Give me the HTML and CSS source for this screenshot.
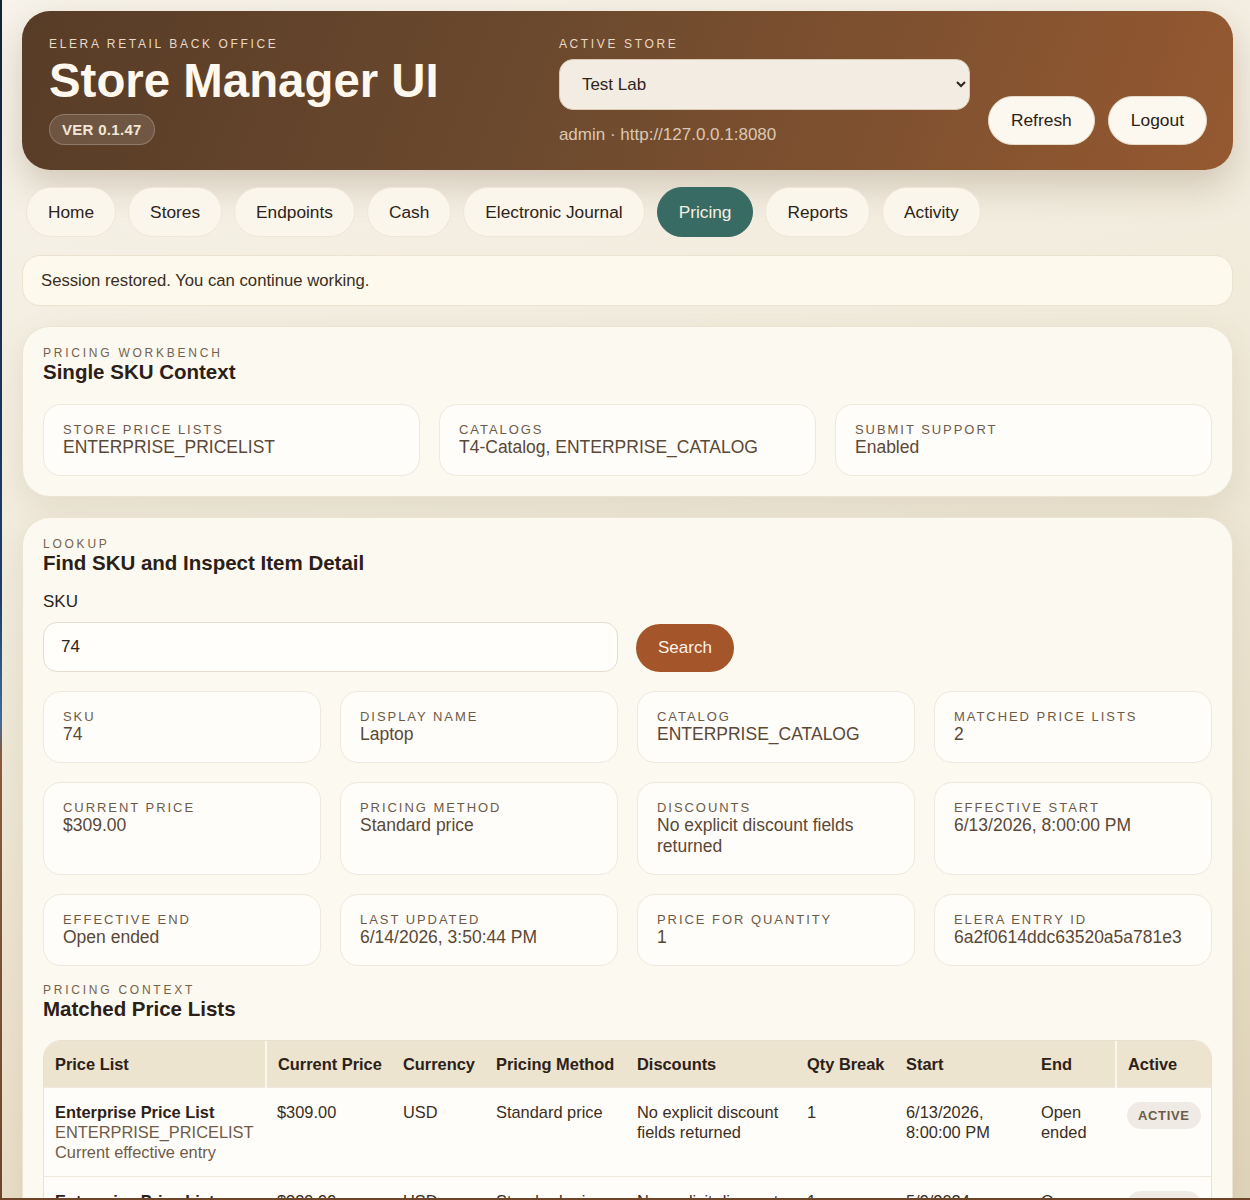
FILE: index.html
```html
<!DOCTYPE html>
<html lang="en">
<head>
  <meta charset="UTF-8">
  <title>Store Manager UI</title>
  <link rel="stylesheet" href="styles.css">
</head>
<body>
  <div class="app">
    <header class="topbar">
      <div class="brand">
        <div class="eyebrow light">Elera Retail Back Office</div>
        <h1>Store Manager UI</h1>
        <span class="version">VER 0.1.47</span>
      </div>

      <div class="store">
        <label class="eyebrow light" for="store">Active Store</label>
        <select id="store">
          <option>Test Lab</option>
        </select>
        <div class="session">admin · http://127.0.0.1:8080</div>
      </div>

      <div class="actions">
        <button class="pill-btn">Refresh</button>
        <button class="pill-btn">Logout</button>
      </div>
    </header>

    <nav class="tabs">
      <button class="tab">Home</button>
      <button class="tab">Stores</button>
      <button class="tab">Endpoints</button>
      <button class="tab">Cash</button>
      <button class="tab">Electronic Journal</button>
      <button class="tab active">Pricing</button>
      <button class="tab">Reports</button>
      <button class="tab">Activity</button>
    </nav>

    <div class="notice">Session restored. You can continue working.</div>

    <section class="panel">
      <div class="eyebrow">Pricing Workbench</div>
      <h2>Single SKU Context</h2>

      <div class="stats three">
        <div class="stat">
          <div class="stat-label">Store Price Lists</div>
          <div class="stat-value">ENTERPRISE_PRICELIST</div>
        </div>
        <div class="stat">
          <div class="stat-label">Catalogs</div>
          <div class="stat-value">T4-Catalog, ENTERPRISE_CATALOG</div>
        </div>
        <div class="stat">
          <div class="stat-label">Submit Support</div>
          <div class="stat-value">Enabled</div>
        </div>
      </div>
    </section>

    <section class="panel">
      <div class="eyebrow">Lookup</div>
      <h2>Find SKU and Inspect Item Detail</h2>

      <form class="lookup" id="lookupForm">
        <label class="field">
          <span>SKU</span>
          <input type="text" value="74">
        </label>
        <button type="submit" class="search-btn">Search</button>
      </form>

      <div class="stats four">
        <div class="stat">
          <div class="stat-label">SKU</div>
          <div class="stat-value">74</div>
        </div>
        <div class="stat">
          <div class="stat-label">Display Name</div>
          <div class="stat-value">Laptop</div>
        </div>
        <div class="stat">
          <div class="stat-label">Catalog</div>
          <div class="stat-value">ENTERPRISE_CATALOG</div>
        </div>
        <div class="stat">
          <div class="stat-label">Matched Price Lists</div>
          <div class="stat-value">2</div>
        </div>
        <div class="stat">
          <div class="stat-label">Current Price</div>
          <div class="stat-value">$309.00</div>
        </div>
        <div class="stat">
          <div class="stat-label">Pricing Method</div>
          <div class="stat-value">Standard price</div>
        </div>
        <div class="stat">
          <div class="stat-label">Discounts</div>
          <div class="stat-value">No explicit discount fields returned</div>
        </div>
        <div class="stat">
          <div class="stat-label">Effective Start</div>
          <div class="stat-value">6/13/2026, 8:00:00 PM</div>
        </div>
        <div class="stat">
          <div class="stat-label">Effective End</div>
          <div class="stat-value">Open ended</div>
        </div>
        <div class="stat">
          <div class="stat-label">Last Updated</div>
          <div class="stat-value">6/14/2026, 3:50:44 PM</div>
        </div>
        <div class="stat">
          <div class="stat-label">Price For Quantity</div>
          <div class="stat-value">1</div>
        </div>
        <div class="stat">
          <div class="stat-label">Elera Entry ID</div>
          <div class="stat-value">6a2f0614ddc63520a5a781e3</div>
        </div>
      </div>

      <div class="eyebrow context">Pricing Context</div>
      <h2>Matched Price Lists</h2>

      <div class="table-wrap">
        <table class="price-table">
          <colgroup>
            <col class="c-list">
            <col class="c-price">
            <col class="c-currency">
            <col class="c-method">
            <col class="c-discounts">
            <col class="c-qty">
            <col class="c-start">
            <col class="c-end">
            <col class="c-active">
          </colgroup>
          <thead>
            <tr>
              <th>Price List</th>
              <th>Current Price</th>
              <th>Currency</th>
              <th>Pricing Method</th>
              <th>Discounts</th>
              <th>Qty Break</th>
              <th>Start</th>
              <th>End</th>
              <th>Active</th>
            </tr>
          </thead>
          <tbody>
            <tr>
              <td>
                <strong>Enterprise Price List</strong>
                <div class="sub">ENTERPRISE_PRICELIST</div>
                <div class="sub">Current effective entry</div>
              </td>
              <td>$309.00</td>
              <td>USD</td>
              <td>Standard price</td>
              <td>No explicit discount fields returned</td>
              <td>1</td>
              <td>6/13/2026, 8:00:00 PM</td>
              <td>Open ended</td>
              <td><span class="badge">ACTIVE</span></td>
            </tr>
            <tr>
              <td>
                <strong>Enterprise Price List</strong>
                <div class="sub">ENTERPRISE_PRICELIST</div>
                <div class="sub">Earlier entry</div>
              </td>
              <td>$329.99</td>
              <td>USD</td>
              <td>Standard price</td>
              <td>No explicit discount fields returned</td>
              <td>1</td>
              <td>5/9/2024, 8:00:00 PM</td>
              <td>Open ended</td>
              <td><span class="badge">ACTIVE</span></td>
            </tr>
          </tbody>
        </table>
      </div>
    </section>
  </div>

  <script>
    document.getElementById("lookupForm").addEventListener("submit", function(e) {
      e.preventDefault();
    });
  </script>
</body>
</html>
```

FILE: styles.css
```css
html {
  background: linear-gradient(180deg, #122238 0%, #1d3f66 50%, #3f6c9c 60%, #8a5a3a 63%, #6e4529 100%);
}
body {
  margin: 0 0 2px 2px;
  height: 1198px;
  overflow: hidden;
  font-family: "Liberation Sans", Arial, sans-serif;
  color: #2c2118;
  background: linear-gradient(165deg, #f7f3ea 0%, #f1ebdc 40%, #e9e0ca 75%, #e1d5ba 100%);
}
.app { padding: 11px 17px 0 20px; }

button, input, select { font-family: inherit; }

.eyebrow { font-size: 12px; line-height: 13px; letter-spacing: 0.23em; text-transform: uppercase; color: #74624f; }
.eyebrow.light { color: #ead9c4; display: block; line-height: 14px; letter-spacing: 0.22em; }

/* header */
.topbar {
  display: grid;
  grid-template-columns: 1fr 411px auto;
  column-gap: 18px;
  padding: 26px 26px 25px 27px;
  border-radius: 28px;
  background: linear-gradient(110deg, #573c27 0%, #6d4a2e 45%, #955931 100%);
  color: #fdf6ea;
  box-shadow: 0 16px 36px rgba(90, 60, 30, 0.22);
}
.brand h1 { margin: 6px 0 0; font-size: 47.4px; line-height: 48px; font-weight: bold; color: #fff8ee; }
.version {
  display: inline-block;
  margin-top: 9px;
  padding: 6px 12px;
  border-radius: 999px;
  font-size: 15px;
  line-height: 17px;
  font-weight: bold;
  letter-spacing: 0.02em;
  color: #f3e6d6;
  background: rgba(255, 255, 255, 0.12);
  border: 1px solid rgba(255, 255, 255, 0.22);
}
.store select {
  display: block;
  width: 100%;
  height: 51px;
  margin-top: 8px;
  padding: 0 12px 0 18px;
  font-size: 17px;
  color: #2f241a;
  background: #f3ece2;
  border: 1px solid #d9cbb6;
  border-radius: 14px;
}
.session { margin-top: 15px; font-size: 17px; color: #dcc8b2; }
.actions { display: flex; gap: 13px; align-self: end; }
.pill-btn {
  height: 49px;
  padding: 0 22px;
  font-size: 17.4px;
  color: #2b2118;
  background: #fdf8ef;
  border: 1px solid #e8dccb;
  border-radius: 999px;
}

/* nav */
.tabs { display: flex; gap: 12px; margin: 17px 0 0 4px; }
.tab {
  height: 50px;
  padding: 0 21px;
  font-size: 17.3px;
  color: #2d2319;
  background: #faf6ec;
  border: 1px solid #eee6d6;
  border-radius: 999px;
}
.tab.active { background: #376b63; border-color: #376b63; color: #f6efe3; }

.notice {
  margin-top: 18px;
  padding: 15px 18px;
  font-size: 16.7px;
  line-height: 19px;
  color: #3a2e22;
  background: #fdf9ed;
  border: 1px solid #ebe2cf;
  border-radius: 18px;
}

/* panels */
.panel {
  margin-top: 20px;
  padding: 20px;
  background: #fcf9f0;
  border: 1px solid #ece4d3;
  border-radius: 28px;
  box-shadow: 0 10px 30px rgba(120, 95, 55, 0.12);
}
.panel h2 { margin: 0; font-size: 20.5px; font-weight: bold; color: #2a2018; }

.stats { display: grid; gap: 19px; margin-top: 20px; }
.stats.three { grid-template-columns: repeat(3, 1fr); }
.stats.four { grid-template-columns: repeat(4, 1fr); margin-top: 19px; }
.stat {
  padding: 17px 19px;
  background: #fffdfa;
  border: 1px solid #efe8dc;
  border-radius: 18px;
}
.stat-label { font-size: 13px; line-height: 15px; letter-spacing: 0.15em; text-transform: uppercase; color: #6d5b48; }
.stat-value { font-size: 17.5px; line-height: 21px; color: #5b4836; }

.lookup {
  display: grid;
  grid-template-columns: repeat(4, 1fr);
  column-gap: 19px;
  margin-top: 17px;
}
.field { grid-column: span 2; display: block; }
.field span { display: block; font-size: 17px; line-height: 20px; color: #2c2118; }
.field input {
  display: block;
  box-sizing: border-box;
  width: 100%;
  height: 50px;
  margin-top: 10px;
  padding: 0 17px;
  font-size: 17px;
  color: #2c2118;
  background: #fffefb;
  border: 1px solid #e6ddcd;
  border-radius: 14px;
}
.search-btn {
  align-self: end;
  justify-self: start;
  height: 48px;
  margin-left: -1px;
  padding: 0 22px;
  font-size: 17px;
  color: #fdf2e6;
  background: #a5552a;
  border: none;
  border-radius: 999px;
}

.eyebrow.context { margin-top: 18px; }

/* table */
.table-wrap {
  margin-top: 19px;
  border: 1px solid #e9e0cf;
  border-radius: 18px;
  overflow: hidden;
  background: #fffdfa;
}
.price-table { width: 100%; border-collapse: collapse; table-layout: fixed; font-size: 16.4px; }
.c-list { width: 222px; }
.c-price { width: 126px; }
.c-currency { width: 93px; }
.c-method { width: 141px; }
.c-discounts { width: 170px; }
.c-qty { width: 99px; }
.c-start { width: 135px; }
.c-end { width: 86px; }
.price-table th {
  padding: 13px 11px;
  text-align: left;
  line-height: 20px;
  white-space: nowrap;
  font-weight: bold;
  color: #2c2118;
  background: #ede4d0;
}
.price-table th:first-child { border-right: 2px solid #fbf7ef; }
.price-table th:last-child { border-left: 2px solid #fbf7ef; }
.price-table td {
  padding: 14px 11px;
  vertical-align: top;
  line-height: 20px;
  color: #3a2e22;
  border-top: 1px solid #efe8dc;
}
.price-table strong { color: #2c2118; }
.sub { color: #6f5b47; }
.badge {
  display: inline-block;
  padding: 5px 11px;
  font-size: 13px;
  line-height: 17px;
  font-weight: bold;
  letter-spacing: 0.05em;
  color: #6d5b48;
  background: #efebe4;
  border-radius: 999px;
}
```
